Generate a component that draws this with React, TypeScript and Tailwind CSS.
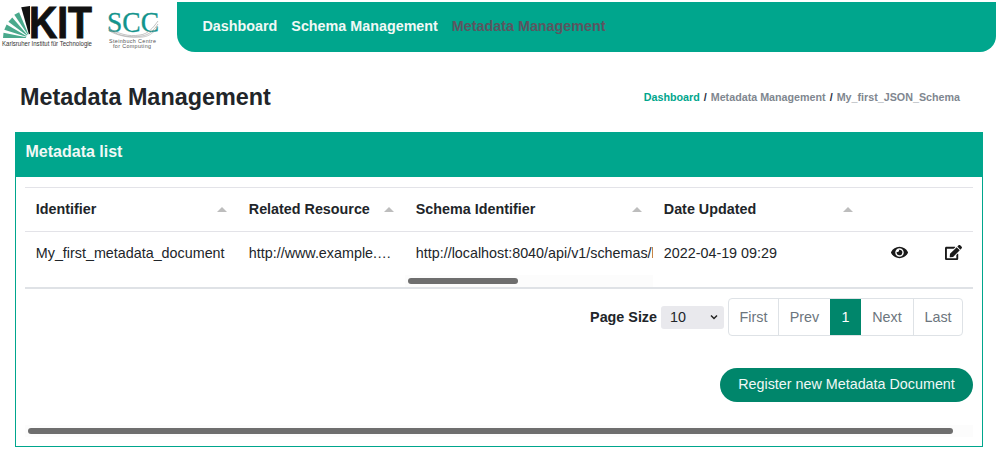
import React from "react"
import { FaEye, FaEdit } from "react-icons/fa"

const TEAL = "bg-[#00a68d]"

// one wedge of the KIT fan, angles in degrees measured from the left
const ray = (from: number, to: number, r: number, inner = 4) => {
  const cx = 29
  const cy = 32
  const pt = (a: number, d: number) => {
    const t = (a * Math.PI) / 180
    return `${(cx - d * Math.cos(t)).toFixed(1)},${(cy - d * Math.sin(t)).toFixed(1)}`
  }
  return [pt(from, inner), pt(from, r), pt(to, r), pt(to, inner)].join(" ")
}

const KitLogo = () => (
  <svg width="92" height="44" viewBox="0 0 92 44" className="block">
    <polygon points={ray(0, 11, 27)} fill="#4aa98c" />
    <polygon points={ray(18, 30, 27)} fill="#4aa98c" />
    <polygon points={ray(37, 49, 27)} fill="#4aa98c" />
    <polygon points={ray(56, 67, 28)} fill="#4aa98c" />
    <polygon points={ray(74, 90, 32)} fill="#111111" />
    <text x="28" y="32" fontFamily="Liberation Sans" fontWeight="700" fontSize="44" textLength="63" lengthAdjust="spacingAndGlyphs" fill="#111111" stroke="#111111" strokeWidth="1">KIT</text>
    <text x="1" y="40" fontFamily="Liberation Sans" fontSize="6.4" textLength="90" lengthAdjust="spacingAndGlyphs" fill="#333333">Karlsruher Institut für Technologie</text>
  </svg>
)

const SccLogo = () => (
  <svg width="54" height="40" viewBox="0 0 54 40" className="block">
    <text x="1" y="21" fontFamily="Liberation Serif" fontSize="30" textLength="52" lengthAdjust="spacingAndGlyphs" fill="#13948c" stroke="#13948c" strokeWidth="0.3">SCC</text>
    <path d="M2 17 C14 23 22 26 34 24 C42 23 47 17 52 10" fill="none" stroke="#9a9a9a" strokeWidth="0.6" />
    <path d="M3 19 C14 25 24 27 36 25 C43 24 48 19 52 13" fill="none" stroke="#9a9a9a" strokeWidth="0.6" />
    <path d="M5 21 C16 26 26 27 37 26 C44 25 48 21 52 16" fill="none" stroke="#a8a8a8" strokeWidth="0.6" />
    <text x="3" y="31.5" fontFamily="Liberation Sans" fontSize="5.4" textLength="47" lengthAdjust="spacing" fill="#555555">Steinbuch Centre</text>
    <text x="7" y="36.5" fontFamily="Liberation Sans" fontSize="5.4" textLength="38" lengthAdjust="spacing" fill="#555555">for Computing</text>
  </svg>
)

const Logos = () => (
  <div className="w-[177px] shrink-0 flex items-start pt-[6px] pl-[1px] gap-[13px]">
    <KitLogo />
    <div className="mt-[5px]">
      <SccLogo />
    </div>
  </div>
)

const Caret = () => (
  <span className="inline-block w-0 h-0 border-x-[5px] border-x-transparent border-b-[5px] border-b-[#bdbdbd]" />
)

const headers = [
  { name: "Identifier", w: "w-[213px]", caretPr: "pr-[11px]" },
  { name: "Related Resource", w: "w-[167px]", caretPr: "pr-[11px]" },
  { name: "Schema Identifier", w: "w-[248px]", caretPr: "pr-[11px]" },
  { name: "Date Updated", w: "w-[200px]", caretPr: "pr-[0px]" },
]

export default function App() {
  return (
    <div className="w-[1002px] h-[461px] overflow-hidden bg-white text-[14.34px] text-[#212529] [font-family:'Liberation_Sans',sans-serif]">
      {/* top bar */}
      <div className="flex h-[52px]">
        <Logos />
        <nav className={`w-[819px] h-[50px] mt-[2px] ${TEAL} rounded-bl-[18px] rounded-br-[16px] flex items-center pl-[25.5px] pb-[1px] gap-[14px] font-bold`}>
          <span className="text-[#f1f8f6]">Dashboard</span>
          <span className="text-[#f1f8f6]">Schema Management</span>
          <span className="text-[#5c5560]">Metadata Management</span>
        </nav>
      </div>

      {/* title row */}
      <div className="flex items-center justify-between h-[60px] mt-[15px] pl-[20px] pr-[42px]">
        <h1 className="text-[23.4px] font-bold text-[#212529] leading-[30px]">Metadata Management</h1>
        <div className="text-[10.72px] font-bold flex gap-[4px]">
          <span className="text-[#00a68d]">Dashboard</span>
          <span className="text-[#1f2d3d]">/</span>
          <span className="text-[#7f8790]">Metadata Management</span>
          <span className="text-[#1f2d3d]">/</span>
          <span className="text-[#7f8790]">My_first_JSON_Schema</span>
        </div>
      </div>

      {/* card */}
      <div className="ml-[15px] mt-[5px] w-[968px] h-[315px] border border-[#00a68d] border-t-0">
        <div className={`${TEAL} -mx-px h-[45px] pl-[10.5px] pt-[10px] text-[16px] leading-[19px] font-bold text-[#f1f8f6]`}>Metadata list</div>
        <div className="px-[9px] pt-[10px]">
          <div className="border-t border-[#e3e3e8]">
            {/* header row */}
            <div className="flex h-[44px] items-center font-bold border-b border-[#e3e3e8]">
              {headers.map((h) => (
                <div key={h.name} className={`${h.w} shrink-0 pl-[10.8px] flex items-center justify-between ${h.caretPr}`}>
                  <span className="whitespace-nowrap">{h.name}</span>
                  <Caret />
                </div>
              ))}
            </div>
            {/* data row */}
            <div className="flex h-[57px] border-b-2 border-[#dfe2e6]">
              <div className="w-[213px] shrink-0 pl-[10.8px] pt-[11px] whitespace-nowrap">My_first_metadata_document</div>
              <div className="w-[167px] shrink-0 pl-[10.8px] pt-[11px] whitespace-nowrap">http://www.example.…</div>
              <div className="w-[248px] shrink-0 pl-[10.8px] pt-[11px] overflow-hidden">
                <div className="whitespace-nowrap h-[22px]">http://localhost:8040/api/v1/schemas/localhost_schema</div>
                <div className="-ml-[10.8px] mt-[10px] h-[12px] bg-[#fcfcfc] pt-[3px]">
                  <div className="ml-[3px] w-[110px] h-[6px] rounded-full bg-[#6e6e6e]" />
                </div>
              </div>
              <div className="w-[200px] shrink-0 pl-[10.8px] pt-[11px] whitespace-nowrap">2022-04-19 09:29</div>
              <div className="w-[53px] shrink-0 pt-[12px] pl-[37.5px]">
                <FaEye className="text-[17px] text-[#1a1a1a]" />
              </div>
              <div className="flex-1 pt-[12px] pl-[38.5px]">
                <FaEdit className="text-[17px] text-[#1a1a1a]" />
              </div>
            </div>
          </div>

          {/* pagination */}
          <div className="flex items-center justify-end h-[38px] mt-[9px] pr-[10px]">
            <span className="font-bold mr-[4px] pt-[1px]">Page Size</span>
            <div className="w-[63px] h-[23px] bg-[#e9e9ed] rounded-[3px] flex items-center justify-between pl-[9px] pr-[5px] mr-[4px]">
              <span className="pt-[1px]">10</span>
              <svg width="10" height="10" viewBox="0 0 10 10"><path d="M2 3.5 L5 6.5 L8 3.5" fill="none" stroke="#222" strokeWidth="1.5" /></svg>
            </div>
            <div className="flex h-[38px] border border-[#dee2e6] rounded-[4px] text-[#6c757d]">
              <span className="w-[50px] pt-[1px] flex items-center justify-center border-r border-[#dee2e6]">First</span>
              <span className="w-[51px] pt-[1px] flex items-center justify-center">Prev</span>
              <span className="w-[31px] pt-[1px] flex items-center justify-center bg-[#00866b] text-white">1</span>
              <span className="w-[53px] pt-[1px] flex items-center justify-center border-r border-[#dee2e6]">Next</span>
              <span className="w-[48px] pt-[1px] flex items-center justify-center">Last</span>
            </div>
          </div>

          <div className="flex justify-end mt-[32px]">
            <button className="w-[253px] h-[34px] rounded-full bg-[#00866b] text-[#f1f8f6]">Register new Metadata Document</button>
          </div>

          <div className="h-[12px] mt-[23px] bg-[#fcfcfc] pt-[3px]">
            <div className="ml-[3px] w-[925px] h-[6px] rounded-full bg-[#6e6e6e]" />
          </div>
        </div>
      </div>
    </div>
  )
}
